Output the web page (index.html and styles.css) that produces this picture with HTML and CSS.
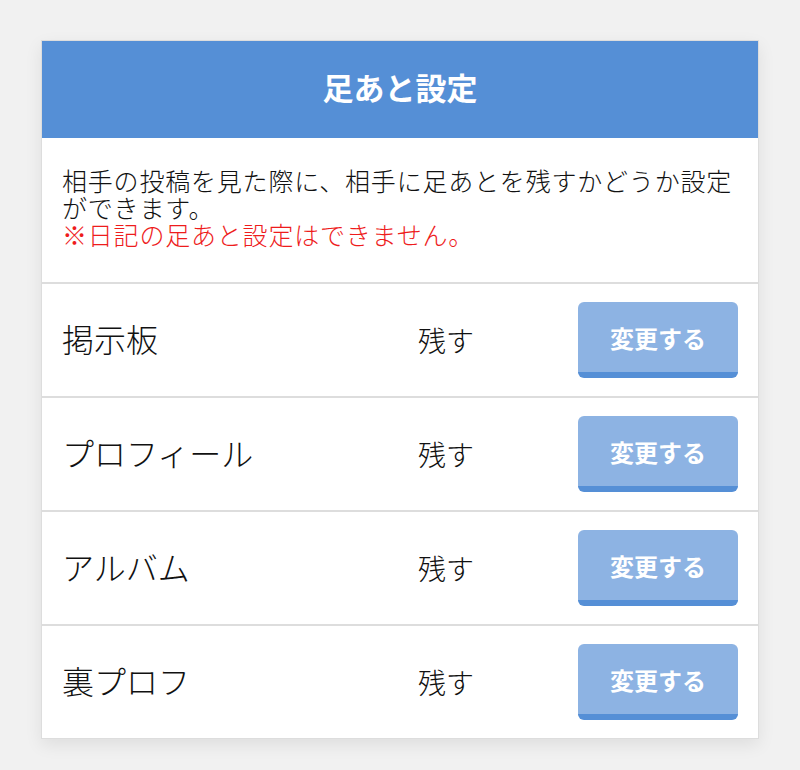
FILE: index.html
```html
<!DOCTYPE html>
<html lang="ja">
<head>
    <meta charset="UTF-8" />
    <meta name="viewport" content="width=device-width, initial-scale=1.0">
    <title>足あと設定</title>
    <link rel="stylesheet" href="styles.css">
</head>
<body>
    <div class="card">
        <div class="card-header">
            <h2>足あと設定</h2>
        </div>

        <div class="description">
            <p>相手の投稿を見た際に、相手に足あとを残すかどうか設定ができます。</p>
            <p class="notice">※日記の足あと設定はできません。</p>
        </div>

        <div class="setting-row">
            <span class="setting-label">掲示板</span>
            <span class="setting-value">残す</span>
            <button class="change-btn">変更する</button>
        </div>
        <div class="setting-row">
            <span class="setting-label">プロフィール</span>
            <span class="setting-value">残す</span>
            <button class="change-btn">変更する</button>
        </div>
        <div class="setting-row">
            <span class="setting-label">アルバム</span>
            <span class="setting-value">残す</span>
            <button class="change-btn">変更する</button>
        </div>
        <div class="setting-row">
            <span class="setting-label">裏プロフ</span>
            <span class="setting-value">残す</span>
            <button class="change-btn">変更する</button>
        </div>
    </div>
</body>
</html>
```

FILE: styles.css
```css
:root {
    --bg-color: #f1f1f1;
    --surface-color: #ffffff;
    --primary-color: #558fd6;
    --button-color: #8db3e3;
    --text-color: #111111;
    --danger-color: #ee1c1c;
    --border-color: #dddddd;
}

* {
    margin: 0;
    padding: 0;
    box-sizing: border-box;
}

body {
    font-family: "Noto Sans CJK JP", "Noto Sans", sans-serif;
    background-color: var(--bg-color);
    color: var(--text-color);
    padding: 40px 0;
}

.card {
    width: 718px;
    margin: 0 auto;
    background-color: var(--surface-color);
    border: 1px solid var(--border-color);
    box-shadow: 0 6px 16px rgba(0, 0, 0, 0.08);
}

.card-header {
    background-color: var(--primary-color);
    height: 97px;
    padding-bottom: 6px;
    display: flex;
    justify-content: center;
    align-items: center;
}

.card-header h2 {
    color: white;
    font-size: 31px;
    font-weight: 700;
    line-height: 1;
}

.description {
    padding: 29px 20px 34px;
    font-size: 25px;
    line-height: 27px;
    font-weight: 300;
    letter-spacing: 0.8px;
}

.description .notice {
    color: var(--danger-color);
}

.setting-row {
    display: grid;
    grid-template-columns: 1fr 160px 160px;
    align-items: center;
    height: 114px;
    padding: 0 20px;
    border-top: 2px solid var(--border-color);
}

.setting-label {
    font-size: 32px;
    font-weight: 300;
    line-height: 1;
    padding-bottom: 4px;
}

.setting-value {
    font-size: 28px;
    font-weight: 300;
    line-height: 1;
}

.change-btn {
    height: 76px;
    background-color: var(--button-color);
    color: white;
    border: none;
    border-bottom: 6px solid var(--primary-color);
    border-radius: 6px;
    font-family: inherit;
    font-size: 24px;
    font-weight: 700;
    cursor: pointer;
}
```
